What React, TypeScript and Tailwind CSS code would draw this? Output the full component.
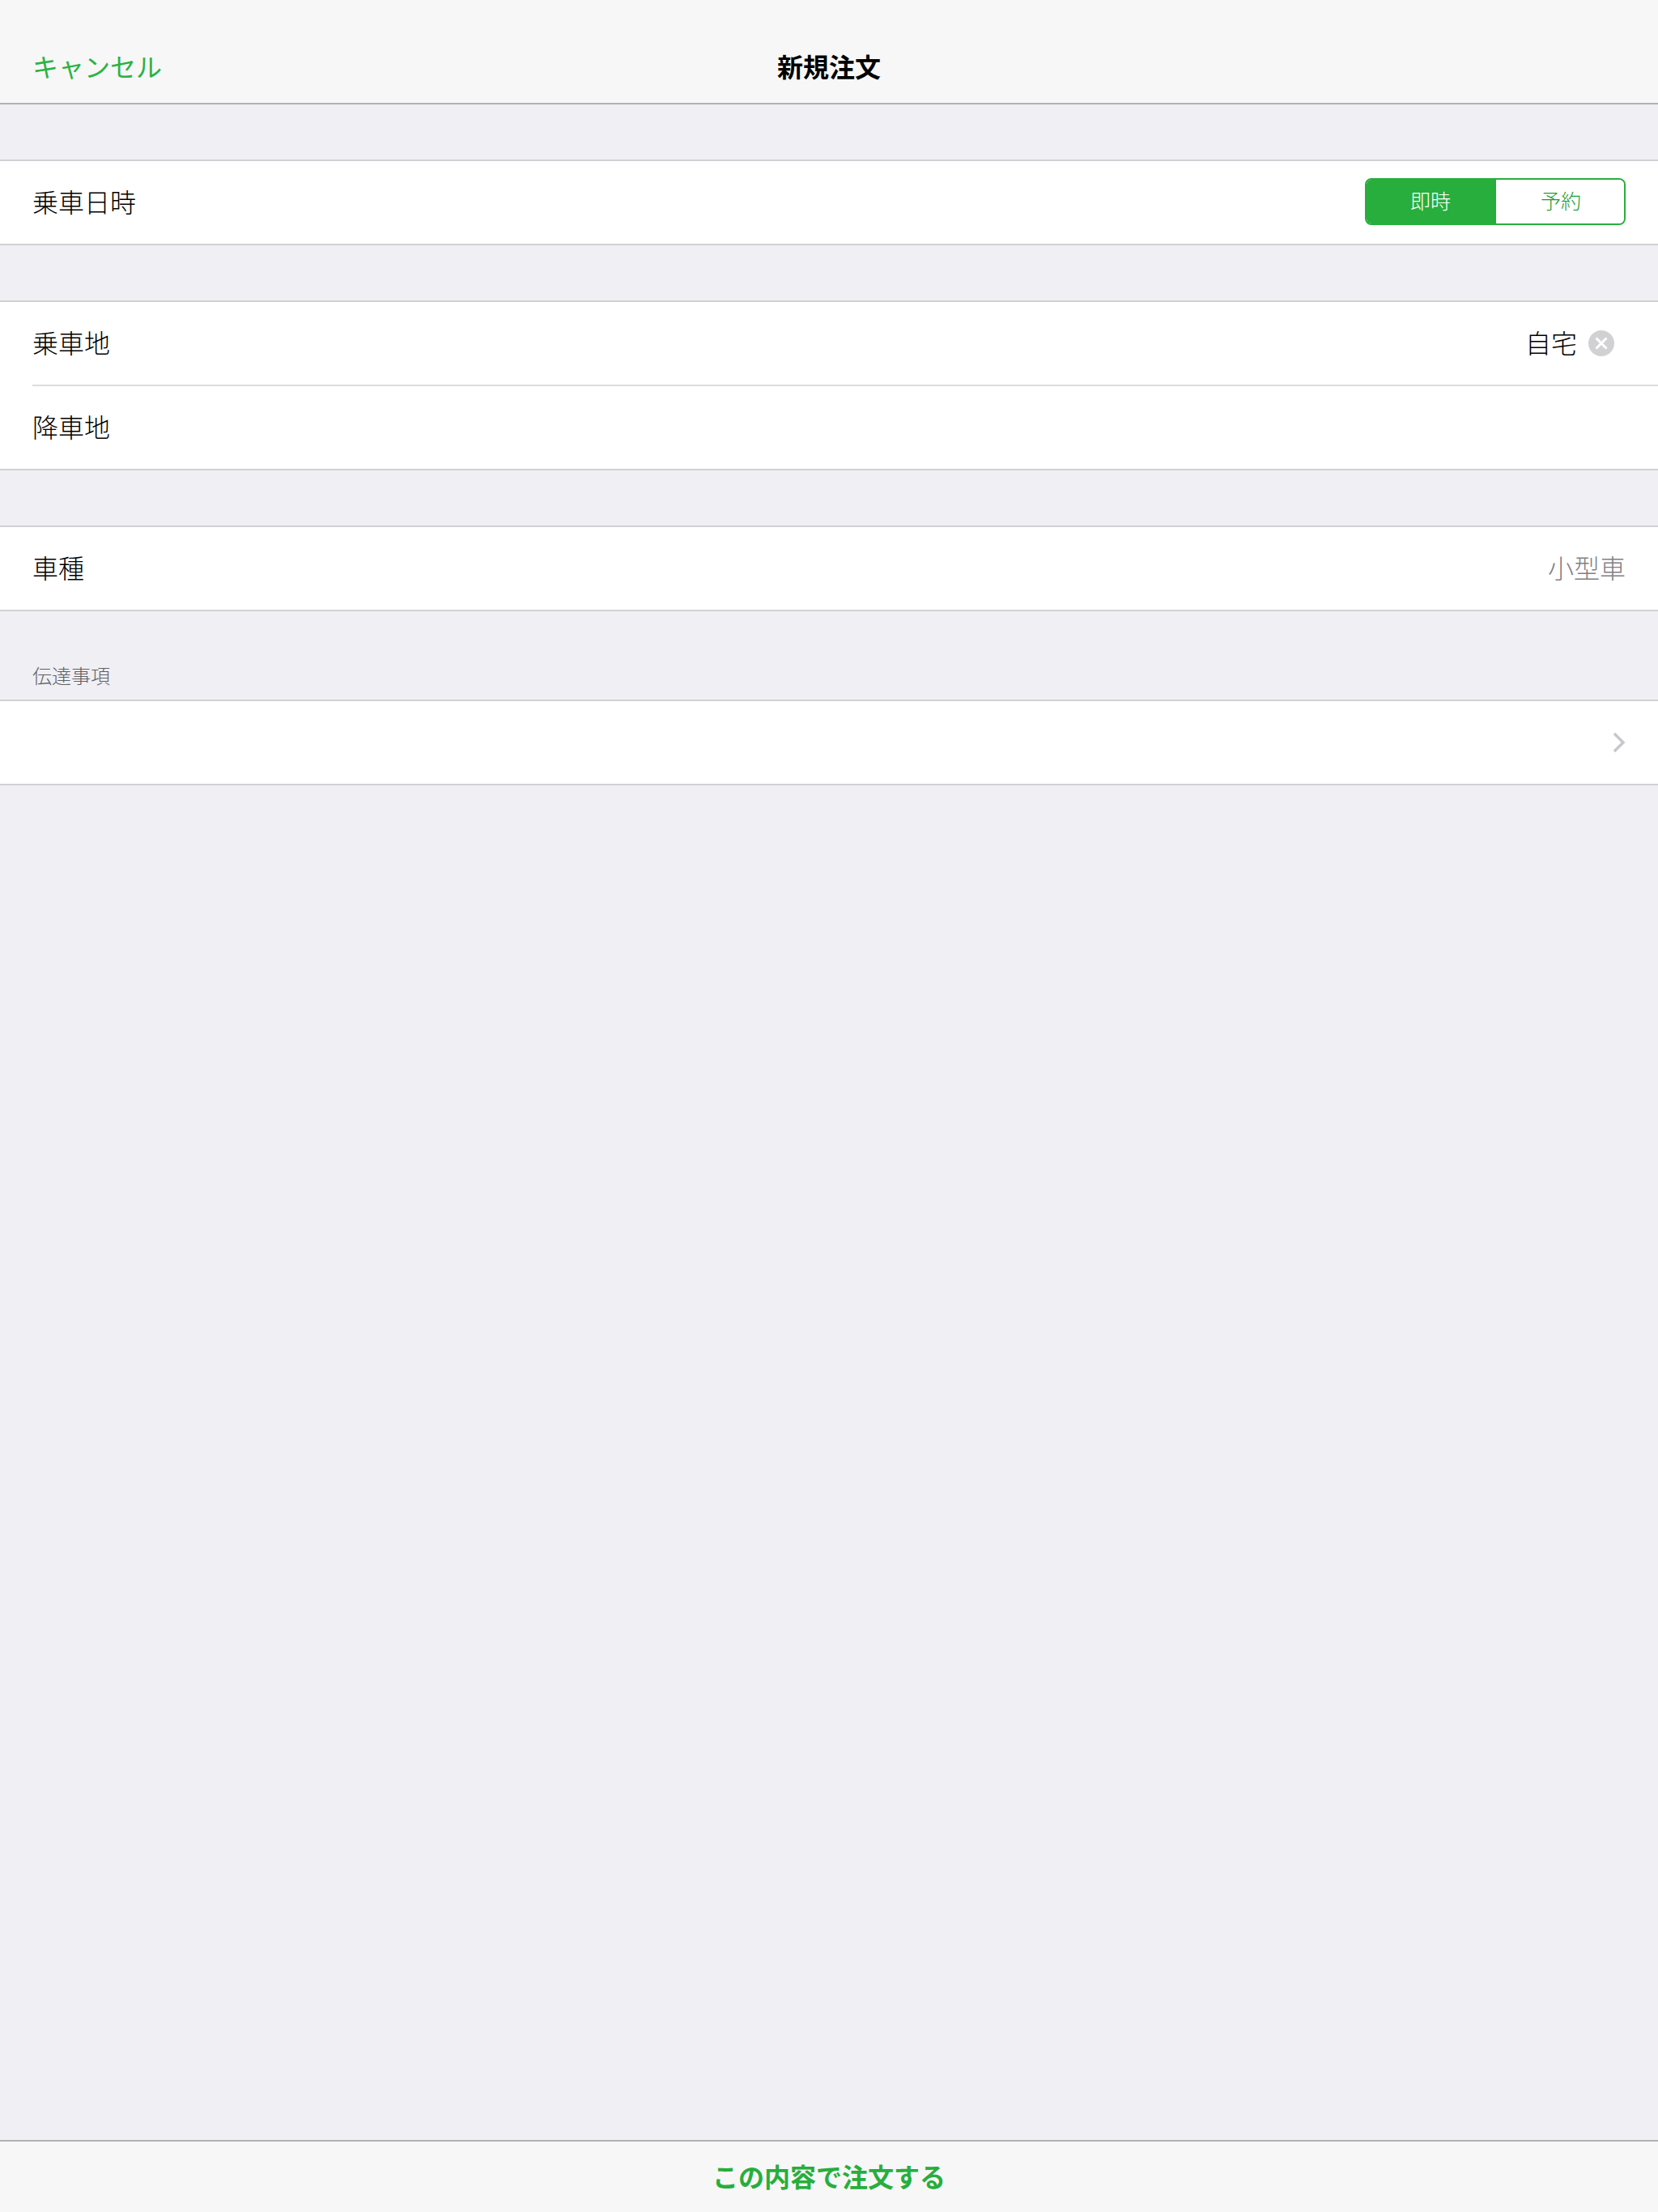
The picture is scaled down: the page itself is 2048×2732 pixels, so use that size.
const font = { fontFamily: '"Noto Sans CJK JP", sans-serif' };

const Row = ({ label, children }: { label?: string; children?: React.ReactNode }) => (
  <div className="flex h-[102px] items-center justify-between pl-[40px] pr-[40px]">
    <span className="pb-[4px] text-[32px] leading-none font-light text-black">{label}</span>
    {children}
  </div>
);

// Section with hairlines top and bottom.
const Section = ({ children }: { children: React.ReactNode }) => (
  <div className="border-y-2 border-[#d0d0d5] bg-white">{children}</div>
);

export default function App() {
  return (
    <div className="flex h-[2732px] w-[2048px] flex-col bg-[#efeff4]" style={font}>
      {/* nav bar */}
      <div className="relative flex h-[129px] shrink-0 items-end border-b-2 border-[#b1b1b5] bg-[#f7f7f7] pb-[26px] pl-[40px]">
        <span className="text-[32px] leading-[40px] font-normal text-[#2ab343]">キャンセル</span>
        <span className="absolute bottom-[26px] left-0 w-full text-center text-[32px] leading-[40px] font-bold text-black">新規注文</span>
      </div>

      <div className="mt-[68px]">
        <Section>
          <Row label="乗車日時">
            <div className="mb-[2px] flex h-[58px] w-[322px] overflow-hidden rounded-[8px] border-2 border-[#27ae3c]">
              <div className="flex w-[160px] items-center justify-center bg-[#27ae3c] pr-[2px] pb-[3px] text-[25px] leading-none font-light text-white">即時</div>
              <div className="flex flex-1 items-center justify-center bg-white pl-[2px] pb-[3px] text-[25px] leading-none font-light text-[#1a9e30]">予約</div>
            </div>
          </Row>
        </Section>
      </div>

      <div className="mt-[68px]">
        <Section>
          <Row label="乗車地">
            <div className="mr-[14px] flex items-center gap-[14px]">
              <span className="pb-[4px] text-[32px] leading-none font-light text-black">自宅</span>
              <svg viewBox="0 0 32 32" className="h-[32px] w-[32px]">
                <circle cx="16" cy="16" r="16" fill="#d1d1d3" />
                <path d="M9.5 9.5l13 13M22.5 9.5l-13 13" stroke="#fff" strokeWidth="3" />
              </svg>
            </div>
          </Row>
          <div className="ml-[40px] h-[2px] bg-[#dcdcdf]" />
          <Row label="降車地" />
        </Section>
      </div>

      <div className="mt-[68px]">
        <Section>
          <Row label="車種">
            <span className="pb-[4px] text-[32px] leading-none font-light text-[#808085]">小型車</span>
          </Row>
        </Section>
      </div>

      <div className="flex h-[109px] items-end pb-[14px] pl-[40px] text-[24px] leading-[32px] font-light text-[#5f5f64]">伝達事項</div>

      <Section>
        <Row>
          <svg viewBox="0 0 16 26" className="h-[26px] w-[16px]">
            <path d="M2 2l11 11-11 11" fill="none" stroke="#c7c7cc" strokeWidth="3.5" />
          </svg>
        </Row>
      </Section>

      {/* bottom toolbar */}
      <div className="mt-auto flex h-[89px] items-center justify-center border-t-2 border-[#b1b1b5] bg-[#f7f7f7] pb-[4px] text-[32px] leading-none font-bold text-[#27ae3c]">
        この内容で注文する
      </div>
    </div>
  );
}
